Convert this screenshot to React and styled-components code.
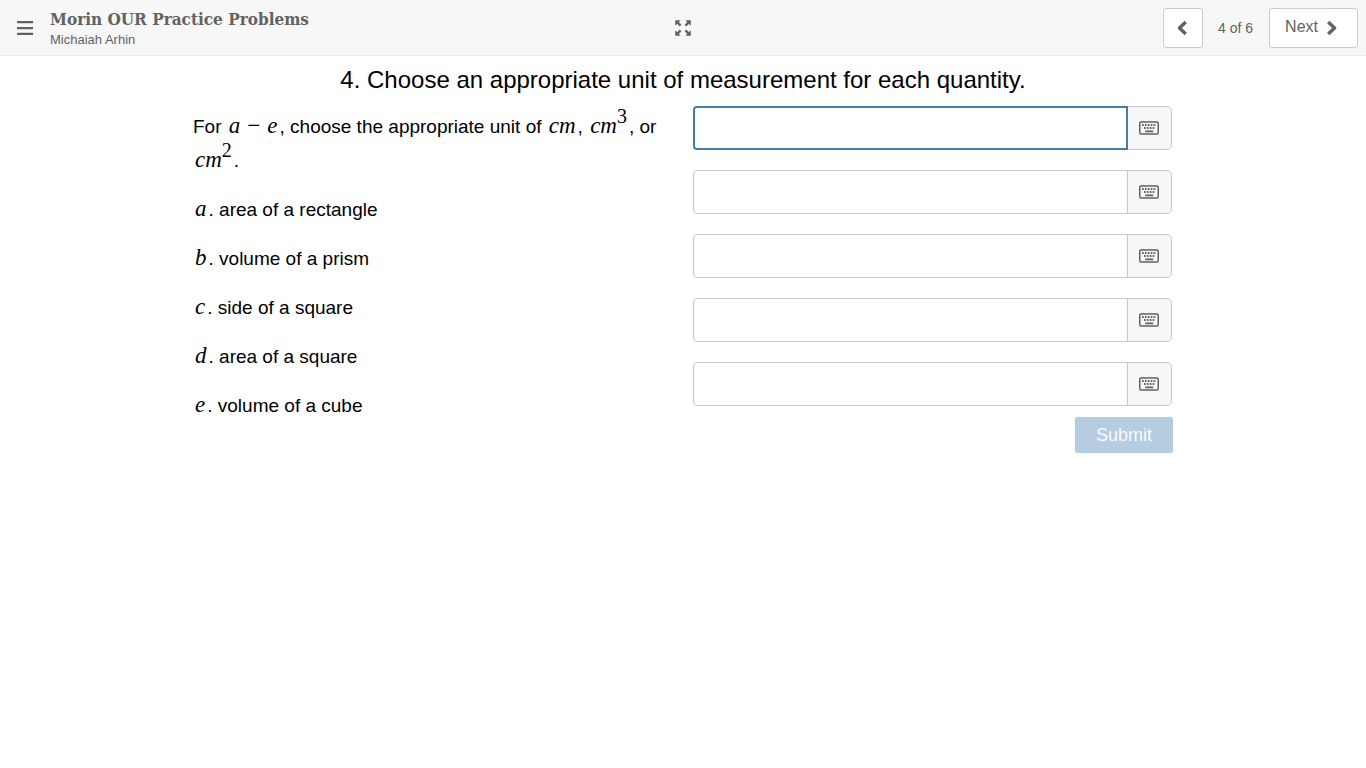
import React from 'react';
import styled, { createGlobalStyle } from 'styled-components';

const GlobalStyle = createGlobalStyle`
  * { box-sizing: border-box; }
  body {
    margin: 0;
    background: #fff;
    color: #111;
    font-family: "Liberation Sans", Arial, sans-serif;
  }
  button, input { font-family: inherit; }
`;

const Header = styled.header`
  display: grid;
  grid-template-columns: 1fr auto 1fr;
  align-items: center;
  height: 56px;
  padding: 0 8px;
  background: #f7f7f7;
  border-bottom: 1px solid #e9e9e9;
  color: #626262;
`;

const Brand = styled.div`
  display: flex;
  align-items: center;
  gap: 8px;
`;

const BrandText = styled.div`
  padding-top: 3px;
`;

const IconButton = styled.button`
  display: flex;
  align-items: center;
  justify-content: center;
  width: 34px;
  height: 40px;
  padding: 0;
  border: 0;
  background: none;
  color: inherit;
`;

const Title = styled.h1`
  margin: 0;
  font: bold 17px/22px "DejaVu Serif Condensed", "DejaVu Serif", serif;
  white-space: nowrap;
`;

const Author = styled.p`
  margin: 0;
  font-size: 13px;
  line-height: 20px;
`;

const Pager = styled.nav`
  display: flex;
  align-items: center;
  justify-content: flex-end;
`;

const PageButton = styled.button`
  display: flex;
  align-items: center;
  justify-content: center;
  gap: 8px;
  height: 40px;
  padding: ${(p) => (p.$wide ? '0 19px 0 15px' : '0 14px 0 12px')};
  border: 1px solid #ccc;
  border-radius: 3px;
  background: #fff;
  color: #626262;
  font-size: 16px;
  line-height: 20px;
`;

const NextLabel = styled.span`
  padding-bottom: 2px;
`;

const Position = styled.span`
  padding: 0 16px 0 15px;
  font-size: 14px;
`;

const Main = styled.main`
  max-width: 980px;
  margin: 0 auto;
`;

const Question = styled.h2`
  margin: 0;
  padding: 8px 0 10px;
  font-size: 24px;
  font-weight: 400;
  line-height: 32px;
  text-align: center;
  color: #000;
`;

const Columns = styled.div`
  display: grid;
  grid-template-columns: 1fr 1fr;
  gap: 20px;
`;

const Prompt = styled.div`
  padding-top: 4px;
  font-size: 19px;
  line-height: 34px;
  color: #000;
`;

const Paragraph = styled.p`
  margin: 0 0 15px;
`;

const MathText = styled.span`
  padding: 0 2px;
  font-family: "Liberation Serif", "Times New Roman", serif;
  font-size: 23px;
  font-style: italic;
  line-height: 1;
  white-space: nowrap;

  sup {
    font-size: 20px;
    font-style: normal;
    line-height: 0;
    vertical-align: 10px;
  }
`;

const Form = styled.form`
  display: flex;
  flex-direction: column;
`;

const Fields = styled.div`
  display: grid;
  gap: 20px;
  padding-right: 1px;
`;

const Field = styled.div`
  display: flex;
  height: 44px;
`;

const Answer = styled.input`
  flex: 1;
  min-width: 0;
  padding: 0 10px;
  border: 1px solid #c8c8c8;
  border-radius: 4px 0 0 4px;
  background: #fff;
  font-size: 18px;
  outline: 0;

  &:focus { border: 2px solid #427fad; }
`;

const KeyboardButton = styled.button`
  display: flex;
  align-items: center;
  justify-content: center;
  width: 44px;
  padding: 0 2px 0 0;
  border: 1px solid #c8c8c8;
  border-left: 0;
  border-radius: 0 5px 5px 0;
  background: #f7f7f7;
  color: #626262;
`;

const Submit = styled.button`
  align-self: flex-end;
  height: 36px;
  margin-top: 11px;
  padding: 0 21px;
  border: 0;
  border-radius: 2px;
  background: #b5cce1;
  color: #f8fbfd;
  font-size: 18px;
`;

const MenuIcon = () => (
  <svg width="16" height="14" viewBox="0 0 16 14" fill="currentColor" aria-hidden="true">
    <path d="M0 0h16v2.3H0zM0 5.9h16v2.3H0zM0 11.7h16V14H0z" />
  </svg>
);

const ExpandIcon = () => (
  <svg width="16" height="16" viewBox="0 0 16 16" fill="currentColor" aria-hidden="true">
    {[0, 90, 180, 270].map((angle) => (
      <path key={angle} transform={`rotate(${angle} 8 8)`} d="M0.2 0.2h5.3L3.9 2.2l2.5 2.6-1.6 1.6-2.6-2.5L0.2 5.5z" />
    ))}
  </svg>
);

const Chevron = ({ right }) => (
  <svg width="12" height="16" viewBox="0 0 12 16" fill="none" stroke="currentColor" strokeWidth="3.4" strokeLinejoin="round" aria-hidden="true">
    <path d={right ? 'M2.2 2 8.6 8l-6.4 6' : 'M9.8 2 3.4 8l6.4 6'} />
  </svg>
);

const KeyboardIcon = () => (
  <svg width="22" height="14" viewBox="0 0 22 14" fill="none" aria-hidden="true">
    <rect x="1.75" y="1" width="18.5" height="12" rx="1.3" stroke="currentColor" strokeWidth="1.5" />
    <path
      d="M4 4h1.7M6.9 4h1.7M9.8 4h1.7M12.7 4h1.7M15.6 4h1.7M6 7h1.7M8.9 7h1.7M11.8 7h1.7M14.7 7h1.7M7.2 10.3h8"
      stroke="currentColor"
      strokeWidth="1.8"
    />
  </svg>
);

const items = [
  ['a', 'area of a rectangle'],
  ['b', 'volume of a prism'],
  ['c', 'side of a square'],
  ['d', 'area of a square'],
  ['e', 'volume of a cube'],
];

export default function App() {
  return (
    <>
      <GlobalStyle />
      <Header>
        <Brand>
          <IconButton type="button" aria-label="Menu"><MenuIcon /></IconButton>
          <BrandText>
            <Title>Morin OUR Practice Problems</Title>
            <Author>Michaiah Arhin</Author>
          </BrandText>
        </Brand>
        <IconButton type="button" aria-label="Full screen"><ExpandIcon /></IconButton>
        <Pager aria-label="Questions">
          <PageButton type="button" aria-label="Previous"><Chevron /></PageButton>
          <Position>4 of 6</Position>
          <PageButton type="button" $wide>
            <NextLabel>Next</NextLabel>
            <Chevron right />
          </PageButton>
        </Pager>
      </Header>
      <Main>
        <Question>4. Choose an appropriate unit of measurement for each quantity.</Question>
        <Columns>
          <Prompt>
            <Paragraph>
              For <MathText>a − e</MathText>, choose the appropriate unit of{' '}
              <MathText>cm</MathText>, <MathText>cm<sup>3</sup></MathText>, or{' '}
              <MathText>cm<sup>2</sup></MathText>.
            </Paragraph>
            {items.map(([letter, text]) => (
              <Paragraph key={letter}><MathText>{letter}</MathText>. {text}</Paragraph>
            ))}
          </Prompt>
          <Form onSubmit={(event) => event.preventDefault()}>
            <Fields>
              {items.map(([letter], index) => (
                <Field key={letter}>
                  <Answer type="text" aria-label={`Answer ${letter}`} autoComplete="off" autoFocus={index === 0} />
                  <KeyboardButton type="button" aria-label={`Math keyboard for answer ${letter}`}>
                    <KeyboardIcon />
                  </KeyboardButton>
                </Field>
              ))}
            </Fields>
            <Submit type="submit" disabled>Submit</Submit>
          </Form>
        </Columns>
      </Main>
    </>
  );
}
